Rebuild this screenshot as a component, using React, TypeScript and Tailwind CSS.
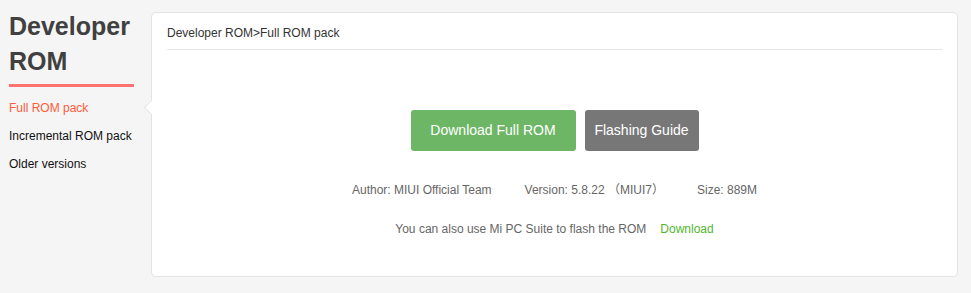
import React from 'react';

const menu = ['Full ROM pack', 'Incremental ROM pack', 'Older versions'];

function App() {
  const active = 0;
  return (
    <div className="flex w-[971px] h-[293px] bg-[#f5f5f5] font-['Liberation_Sans','Noto_Sans_CJK_SC',sans-serif]">
      {/* left side */}
      <aside className="w-[151px] shrink-0 pl-[9px] pr-[17px] pt-[9px]">
        <h1 className="text-[25px] leading-[35px] font-bold text-[#404040]">
          Developer
          <br />
          ROM
        </h1>
        <div className="mt-[5px] h-[3px] bg-[#ff7272]" />
        <ul className="mt-[7px]">
          {menu.map((item, i) => (
            <li
              key={item}
              className={`text-[12px] leading-[28px] ${i === active ? 'text-[#ff5c3a]' : 'text-[#111]'}`}
            >
              {item}
            </li>
          ))}
        </ul>
      </aside>

      {/* card */}
      <main className="relative mt-[12px] mr-[13px] h-[265px] flex-1 rounded-[5px] border border-[#e3e3e3] bg-white px-[15px]">
        <span className="absolute left-[-6px] top-[89px] h-[11px] w-[11px] rotate-45 border-b border-l border-[#e3e3e3] bg-white" />
        <div className="border-b border-[#e6e6e6] pt-[12px] pb-[8px] text-[12px] leading-[16px] text-[#333]">
          Developer ROM&gt;Full ROM pack
        </div>

        <div className="mt-[60px] flex justify-center gap-[9px]">
          <button className="h-[41px] w-[165px] rounded-[3px] bg-[#6cb665] text-[14px] text-white">
            Download Full ROM
          </button>
          <button className="h-[41px] w-[114px] rounded-[3px] bg-[#777777] text-[14px] text-white">
            Flashing Guide
          </button>
        </div>

        <div className="mt-[31px] flex justify-center gap-[33px] text-[12px] leading-[16px] text-[#666]">
          <span>Author: MIUI Official Team</span>
          <span>Version: 5.8.22 （MIUI7）</span>
          <span>Size: 889M</span>
        </div>

        <div className="mt-[23px] flex justify-center gap-[14px] text-[12px] leading-[16px] text-[#666]">
          <span>You can also use Mi PC Suite to flash the ROM</span>
          <a href="#" className="text-[#4fb82e]">Download</a>
        </div>
      </main>
    </div>
  );
}

export default App;
